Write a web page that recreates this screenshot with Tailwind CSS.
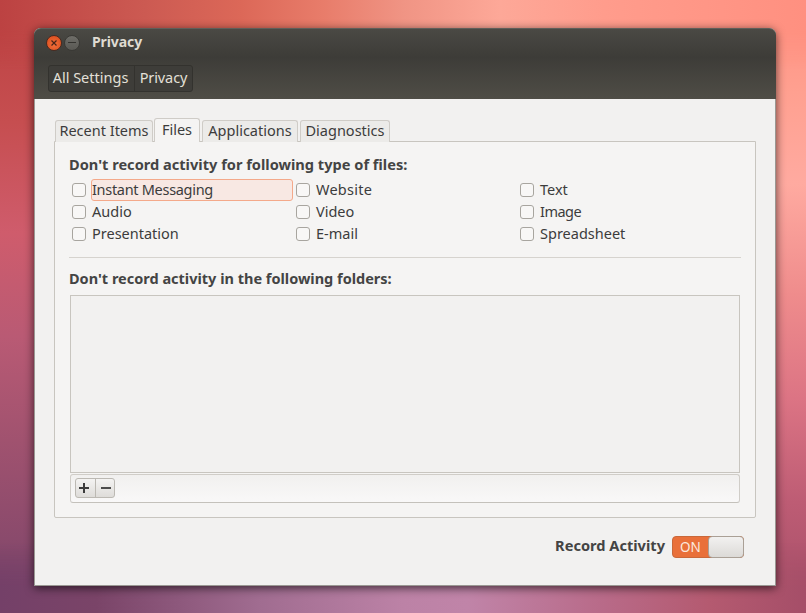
<!DOCTYPE html>
<html lang="en">
<head>
	<meta charset="UTF-9">
	<title>Privacy</title>
	<script src="https://cdn.jsdelivr.net/npm/@tailwindcss/browser@4"></script>
</head>

<body class="relative w-[806px] h-[613px] overflow-hidden bg-[#c0607a] font-['Noto_Sans',sans-serif]">
	<!-- wallpaper: only the margins round the window show, so one gradient per edge -->
	<div class="absolute left-0 top-0 w-[60px] h-full bg-[linear-gradient(180deg,#bc4242_0%,#c64e50_20%,#cf5c6c_38%,#b95a74_55%,#a0526f_72%,#8a4a6c_88%,#744068_100%)]"></div>
	<div class="absolute right-0 top-0 w-[60px] h-full bg-[linear-gradient(180deg,#ff9080_0%,#ffa090_15%,#ffaaa0_30%,#ef8c8c_48%,#dc7484_65%,#bd5c74_82%,#a54e68_100%)]"></div>
	<div class="absolute left-0 bottom-0 w-full h-[70px] bg-[linear-gradient(90deg,#744068_0%,#7a4468_12%,#a06c90_32%,#bc82a6_50%,#c084a8_58%,#b86a88_75%,#b45a70_88%,#a54e68_100%)] [mask-image:linear-gradient(0deg,#000_0px,#000_26px,transparent_70px)]"></div>
	<div class="absolute left-0 top-0 w-full h-[70px] bg-[linear-gradient(90deg,#bc4242_0%,#cc5a52_18%,#dc6858_30%,#e87c6a_40%,#f09484_50%,#fda898_62%,#ff9c8c_75%,#ff9080_100%)] [mask-image:linear-gradient(180deg,#000_0px,#000_28px,transparent_70px)]"></div>

	<!-- window -->
	<div class="absolute left-[34px] top-[28px] w-[742px] h-[558px] flex flex-col rounded-t-[7px] bg-[#f2f1f0] shadow-[0_2px_10px_rgba(0,0,0,0.65)] inset-ring inset-ring-[#9a9893]">
		<!-- title bar -->
		<div class="h-[71px] shrink-0 flex flex-col rounded-t-[7px] bg-[linear-gradient(180deg,#4a4944_0%,#3d3c38_40%,#4f4d46_100%)] border-t border-[#5f5e59]">
			<div class="h-[27px] flex items-center pl-[12px]">
				<div class="w-[16px] h-[16px] rounded-full bg-[radial-gradient(circle_at_50%_60%,#f2703c,#d84818)] border border-[#4a2a20] flex items-center justify-center">
					<svg width="8" height="8" viewBox="0 0 8 8"><path d="M1.5 1.5l5 5M6.5 1.5l-5 5" stroke="#4a2418" stroke-width="1.2"/></svg>
				</div>
				<div class="ml-[2px] w-[16px] h-[16px] rounded-full bg-[linear-gradient(180deg,#6e6d68,#5a5954)] border border-[#3a3935] flex items-center justify-center">
					<div class="w-[8px] h-[1.5px] bg-[#34332f]"></div>
				</div>
				<span class="ml-[12px] mb-[2px] text-[14px] tracking-[-0.1px] font-bold text-[#dfdbd2]">Privacy</span>
			</div>
			<!-- breadcrumb -->
			<div class="mt-[9px] ml-[14px] flex self-start h-[27px] rounded-[3px] border border-[#33322e] bg-[#3e3d39] text-[14.5px] text-[#e4e0d8]">
				<span class="w-[86px] pb-[2px] pr-[2px] flex items-center justify-center border-r border-[#33322e]">All Settings</span>
				<span class="w-[57px] pb-[2px] flex items-center justify-center tracking-[-0.1px]">Privacy</span>
			</div>
		</div>

		<!-- body -->
		<div class="flex-1 flex flex-col px-[20px] pt-[20px] text-[14.5px] text-[#3c3c3c]">
			<!-- tabs -->
			<div class="flex items-end h-[23px] pl-[1px] gap-[2px] relative z-10">
				<div class="h-[22px] w-[98px] pb-[2px] flex items-center justify-center rounded-t-[3px] border border-b-0 border-[#cfccc7] bg-[#ecebe9]">Recent Items</div>
				<div class="h-[24px] w-[46px] pb-[2px] flex items-center justify-center rounded-t-[3px] border border-b-0 border-[#cfccc7] bg-[#f5f4f3] -ml-[1px]">Files</div>
				<div class="h-[22px] w-[96px] pb-[2px] flex items-center justify-center rounded-t-[3px] border border-b-0 border-[#cfccc7] bg-[#ecebe9]">Applications</div>
				<div class="h-[22px] w-[90px] pb-[2px] flex items-center justify-center rounded-t-[3px] border border-b-0 border-[#cfccc7] bg-[#ecebe9]">Diagnostics</div>
			</div>

			<!-- panel -->
			<div class="h-[377px] -mt-[1px] flex flex-col rounded-b-[2px] border border-[#c8c5bf] bg-[#f5f4f3] px-[14px] pt-[14px]">
				<h2 class="h-[18px] flex items-center font-bold text-[14.6px] text-[#444]">Don't record activity for following type of files:</h2>
				<div class="mt-[5px] grid grid-cols-[224px_224px_1fr] auto-rows-[22px]">
					<label class="flex items-center"><span class="ml-[3px] w-[14px] h-[14px] rounded-[3px] border border-[#a8a59f] bg-[#f8f7f6] shrink-0"></span><span class="ml-[5px] h-[22px] w-[203px] flex items-center rounded-[3px] border border-[#f4a98a] bg-[#f8e8e3] tracking-[-0.3px]">Instant Messaging</span></label>
					<label class="flex items-center"><span class="ml-[3px] w-[14px] h-[14px] rounded-[3px] border border-[#a8a59f] bg-[#f8f7f6] shrink-0"></span><span class="ml-[6px] tracking-[0.25px]">Website</span></label>
					<label class="flex items-center"><span class="ml-[3px] w-[14px] h-[14px] rounded-[3px] border border-[#a8a59f] bg-[#f8f7f6] shrink-0"></span><span class="ml-[6px]">Text</span></label>
					<label class="flex items-center"><span class="ml-[3px] w-[14px] h-[14px] rounded-[3px] border border-[#a8a59f] bg-[#f8f7f6] shrink-0"></span><span class="ml-[6px]">Audio</span></label>
					<label class="flex items-center"><span class="ml-[3px] w-[14px] h-[14px] rounded-[3px] border border-[#a8a59f] bg-[#f8f7f6] shrink-0"></span><span class="ml-[6px]">Video</span></label>
					<label class="flex items-center"><span class="ml-[3px] w-[14px] h-[14px] rounded-[3px] border border-[#a8a59f] bg-[#f8f7f6] shrink-0"></span><span class="ml-[6px] tracking-[-0.5px]">Image</span></label>
					<label class="flex items-center"><span class="ml-[3px] w-[14px] h-[14px] rounded-[3px] border border-[#a8a59f] bg-[#f8f7f6] shrink-0"></span><span class="ml-[6px]">Presentation</span></label>
					<label class="flex items-center"><span class="ml-[3px] w-[14px] h-[14px] rounded-[3px] border border-[#a8a59f] bg-[#f8f7f6] shrink-0"></span><span class="ml-[6px]">E-mail</span></label>
					<label class="flex items-center"><span class="ml-[3px] w-[14px] h-[14px] rounded-[3px] border border-[#a8a59f] bg-[#f8f7f6] shrink-0"></span><span class="ml-[6px]">Spreadsheet</span></label>
				</div>
				<div class="mt-[12px] h-px bg-[#d6d3ce]"></div>
				<h2 class="mt-[12px] h-[18px] flex items-center font-bold text-[14.5px] text-[#444]">Don't record activity in the following folders:</h2>
				<div class="mt-[7px] h-[178px] w-[670px] ml-[1px] border border-[#c8c5bf] bg-[#f2f1f0]"></div>
				<div class="mt-px h-[29px] w-[670px] ml-[1px] pb-px flex items-center pl-[4px] rounded-[3px] border border-[#d0cdc8] border-b-[#c4c1bb] bg-[linear-gradient(180deg,#f1f0ef,#f9f8f8)]">
					<div class="flex h-[20px] rounded-[3px] border border-[#bcb9b3] bg-[linear-gradient(180deg,#f4f3f2,#dedcd9)]">
						<div class="w-[20px] pr-[3px] flex items-center justify-center border-r border-[#bcb9b3]">
							<svg width="12" height="12" viewBox="0 0 12 12"><path d="M6 1v10M1 6h10" stroke="#3c3c3c" stroke-width="2"/></svg>
						</div>
						<div class="w-[18px] pl-[2px] flex items-center justify-center">
							<svg width="12" height="12" viewBox="0 0 12 12"><path d="M1 6h10" stroke="#4c4c4c" stroke-width="2"/></svg>
						</div>
					</div>
				</div>
			</div>

			<!-- record switch -->
			<div class="mt-[17px] flex items-center justify-end pr-[12px]">
				<span class="mb-[2px] font-bold text-[14.6px] text-[#444] mr-[7px]">Record Activity</span>
				<div class="relative w-[72px] h-[22px] flex items-center rounded-[4px] border border-[#c9683a] bg-[#e9703a] text-[13.5px] text-[#fbe9de]">
					<span class="pl-[7px]">ON</span>
					<div class="absolute -right-px -top-px w-[36px] h-[22px] rounded-[4px] border border-[#aaa096] bg-[linear-gradient(180deg,#f2f1f0,#dcdad7)]"></div>
				</div>
			</div>
		</div>
	</div>
</body>

</html>
